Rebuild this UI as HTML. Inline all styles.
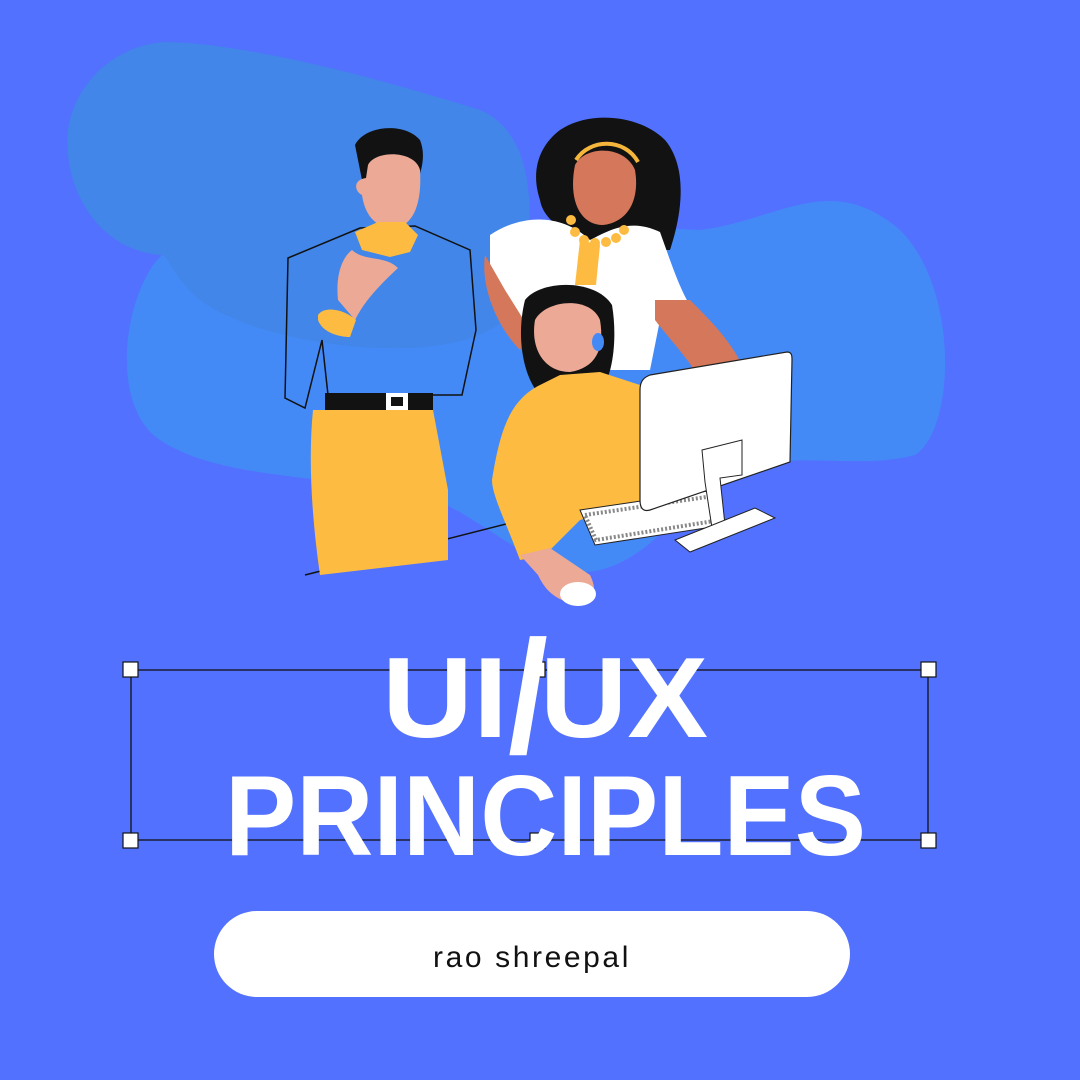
<!DOCTYPE html>
<html><head><meta charset="utf-8"><style>
html,body{margin:0;padding:0;background:#5271FF;}
body{width:1080px;height:1080px;overflow:hidden;position:relative;font-family:"Liberation Sans",sans-serif;}
svg{position:absolute;left:0;top:0;}
</style></head><body>
<svg width="1080" height="1080" viewBox="0 0 1080 1080" xmlns="http://www.w3.org/2000/svg">
<path d="M150,270 C180,215 330,200 430,225 C520,230 600,225 700,230 C780,220 830,170 900,230 C960,290 955,430 915,455 C860,470 790,450 730,470 C690,490 660,555 600,570 C540,585 480,510 420,495 C330,475 220,480 160,440 C115,410 120,320 150,270 Z" fill="#448AF7"/>
<path d="M170,42 C260,45 400,85 480,110 C540,135 535,230 520,300 C500,340 440,350 380,348 C320,346 240,330 200,300 C170,275 170,255 160,255 C100,250 62,190 68,130 C75,80 120,42 170,42 Z" fill="#4186E8"/>
<line x1="305" y1="575" x2="640" y2="490" stroke="#111" stroke-width="1.5"/>
<!-- standing woman -->
<path d="M560,130 C590,110 640,115 665,140 C690,170 680,220 670,250 L600,250 C590,240 545,230 540,200 C530,170 540,145 560,130 Z" fill="#121212"/>
<path d="M575,165 C585,145 625,145 635,170 C640,200 628,222 603,225 C580,225 568,200 575,165 Z" fill="#D4775A"/>
<path d="M576,160 C590,138 625,138 638,162" stroke="#F5B73B" stroke-width="4" fill="none"/>
<path d="M490,235 C520,215 560,212 590,240 C610,230 630,218 660,232 C670,260 680,290 690,305 L660,320 L650,370 L565,370 L520,340 L490,300 Z" fill="#fff"/>
<path d="M485,255 C480,290 500,330 520,350 L530,330 L505,290 Z" fill="#D4775A"/>
<path d="M655,300 L690,300 C710,320 730,340 742,365 L700,380 C690,360 670,340 655,320 Z" fill="#D4775A"/>
<path d="M580,240 L600,245 L596,285 L575,285 Z" fill="#FDBC41"/>
<g fill="#FDBC41"><circle cx="571" cy="220" r="5"/><circle cx="575" cy="232" r="5"/><circle cx="584" cy="240" r="5"/><circle cx="595" cy="243" r="5"/><circle cx="606" cy="242" r="5"/><circle cx="616" cy="238" r="5"/><circle cx="624" cy="230" r="5"/></g>
<!-- man -->
<path d="M288,258 L360,228 L415,226 L470,250 L476,330 L462,395 L328,395 L322,340 L305,408 L285,398 Z" fill="none" stroke="#111" stroke-width="1.5"/>
<path d="M355,145 C365,125 405,122 420,140 C428,160 418,180 410,200 L370,185 L362,180 Z" fill="#121212"/>
<path d="M368,165 C375,150 415,150 420,170 C422,200 415,225 395,228 C375,228 365,215 362,195 C355,192 352,180 366,178 Z" fill="#EBA996"/>
<path d="M355,232 L378,222 L405,222 L418,235 L410,252 L390,257 L362,250 Z" fill="#FDBC41"/>
<path d="M338,300 C335,270 345,255 352,250 C365,262 385,255 398,268 C380,285 365,300 355,320 Z" fill="#EBA996"/>
<path d="M318,315 C325,305 345,310 356,320 L350,337 C338,337 322,332 318,320 Z" fill="#FDBC41"/>
<rect x="325" y="393" width="108" height="17" fill="#121212"/>
<rect x="386" y="393" width="22" height="17" fill="#fff"/><rect x="391" y="397" width="12" height="9" fill="#121212"/>
<path d="M313,410 L325,410 L433,410 L448,490 L448,560 L320,575 C312,520 308,460 313,410 Z" fill="#FDBC41"/>
<!-- seated woman -->
<path d="M525,300 C540,280 595,278 612,305 C618,340 612,380 600,390 L540,395 C525,380 515,340 525,300 Z" fill="#121212"/>
<path d="M535,320 C545,300 590,295 600,320 C605,350 595,368 570,372 C545,372 530,350 535,320 Z" fill="#EBA996"/>
<ellipse cx="598" cy="342" rx="6" ry="9" fill="#448AF7"/>
<path d="M560,375 L600,372 L640,385 L650,500 L580,520 L545,555 L520,560 C505,520 492,495 492,480 C500,430 510,400 540,385 Z" fill="#FDBC41"/>
<path d="M520,555 L550,548 L590,575 C600,595 590,606 575,604 C555,600 545,590 538,575 Z" fill="#EBA996"/>
<ellipse cx="578" cy="594" rx="18" ry="12" fill="#fff"/>
<path d="M580,510 L715,490 L725,525 L595,545 Z" fill="#fff" stroke="#222" stroke-width="1"/>
<path d="M585,515 L713,496 L720,520 L596,540 Z" fill="none" stroke="#888" stroke-width="4" stroke-dasharray="2 2"/>
<path d="M650,375 L787,352 C792,352 792,356 792,360 L790,462 L650,510 C643,512 640,508 640,500 L640,390 C640,380 645,377 650,375 Z" fill="#fff" stroke="#222" stroke-width="1.2"/>
<path d="M702,450 L742,440 L742,475 L720,478 L725,525 L712,528 L705,482 Z" fill="#fff" stroke="#222" stroke-width="1"/>
<path d="M675,540 L755,508 L775,518 L690,552 Z" fill="#fff" stroke="#222" stroke-width="1"/>
<!-- selection box -->
<rect x="131" y="670" width="797" height="170" fill="none" stroke="#111" stroke-width="1.3"/>
<g fill="#fff" stroke="#111" stroke-width="1.2">
<rect x="123" y="662" width="15" height="15"/><rect x="921" y="662" width="15" height="15"/>
<rect x="123" y="833" width="15" height="15"/><rect x="921" y="833" width="15" height="15"/>
<rect x="530" y="662" width="15" height="15"/><rect x="530" y="833" width="15" height="15"/>
</g>
<g fill="#fff" font-family="Liberation Sans, sans-serif" font-weight="bold" font-size="114">
<text x="382" y="737" textLength="126" lengthAdjust="spacingAndGlyphs">UI</text>
<text x="508" y="752" font-size="160" textLength="40" lengthAdjust="spacingAndGlyphs">/</text>
<text x="540" y="737" textLength="168" lengthAdjust="spacingAndGlyphs">UX</text>
<text x="225" y="855" textLength="641" lengthAdjust="spacingAndGlyphs">PRINCIPLES</text>
</g>
<rect x="214" y="911" width="636" height="86" rx="43" fill="#fff"/>
<text x="532" y="967" text-anchor="middle" font-family="Liberation Sans, sans-serif" font-size="30" letter-spacing="2.6" fill="#111">rao shreepal</text>
</svg>
</body></html>
